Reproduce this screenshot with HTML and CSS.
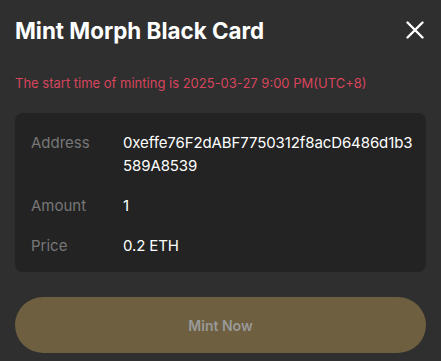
FILE: index.html
```html
<!DOCTYPE html>
<html lang="en">
  <head>
    <meta charset="UTF-8" />
    <meta name="viewport" content="width=device-width, initial-scale=1.0" />
    <title>Mint Morph Black Card</title>
    <link rel="stylesheet" href="styles.css">
  </head>
  <body>
    <div class="modal">
      <div class="modal-header">
        <h2>Mint Morph Black Card</h2>
        <button class="close-btn" aria-label="Close">
          <svg width="18" height="18" viewBox="0 0 18 18">
            <path d="M1.5 1.5 L16.5 16.5 M16.5 1.5 L1.5 16.5" stroke="#fff" stroke-width="2.4" stroke-linecap="round" fill="none" />
          </svg>
        </button>
      </div>

      <p class="notice">The start time of minting is 2025-03-27 9:00 PM(UTC+8)</p>

      <div class="info-card">
        <div class="info-row">
          <span class="label">Address</span>
          <span class="value">0xeffe76F2dABF7750312f8acD6486d1b3589A8539</span>
        </div>
        <div class="info-row">
          <span class="label">Amount</span>
          <span class="value">1</span>
        </div>
        <div class="info-row">
          <span class="label">Price</span>
          <span class="value">0.2 ETH</span>
        </div>
      </div>

      <button class="mint-btn" disabled>Mint Now</button>
    </div>
  </body>
</html>
```

FILE: styles.css
```css
body {
  margin: 0;
  padding: 0;
  background: #2f2f2f;
  font-family: Inter, "Noto Sans", sans-serif;
  color: white;
}

.modal {
  padding: 14px 11px 8px 15px;
}

.modal-header {
  display: flex;
  justify-content: space-between;
  align-items: center;
  height: 32px;
}

.modal-header h2 {
  margin: 0;
  font-size: 22.4px;
  font-weight: 700;
}

.close-btn {
  background: none;
  border: none;
  padding: 0;
  width: 18px;
  height: 18px;
  margin-right: 6px;
  cursor: pointer;
}

.notice {
  margin: 29px 0 0;
  font-size: 13px;
  color: #d8455d;
}

.info-card {
  margin: 22px 4px 0 0;
  background: #232323;
  border-radius: 8px;
  padding: 18px 10px 15px 16px;
}

.info-row {
  display: flex;
  font-size: 15px;
  line-height: 23px;
  margin-bottom: 17px;
}

.info-row:last-child {
  margin-bottom: 0;
}

.label {
  width: 92px;
  flex-shrink: 0;
  color: #777;
}

.value {
  word-break: break-all;
  letter-spacing: -0.1px;
}

.mint-btn {
  display: block;
  width: calc(100% - 4px);
  margin-top: 25px;
  height: 56px;
  border: none;
  border-radius: 28px;
  background: #6d5f3f;
  color: #999;
  font-family: Inter, "Noto Sans", sans-serif;
  font-size: 14px;
  font-weight: 600;
}
```
